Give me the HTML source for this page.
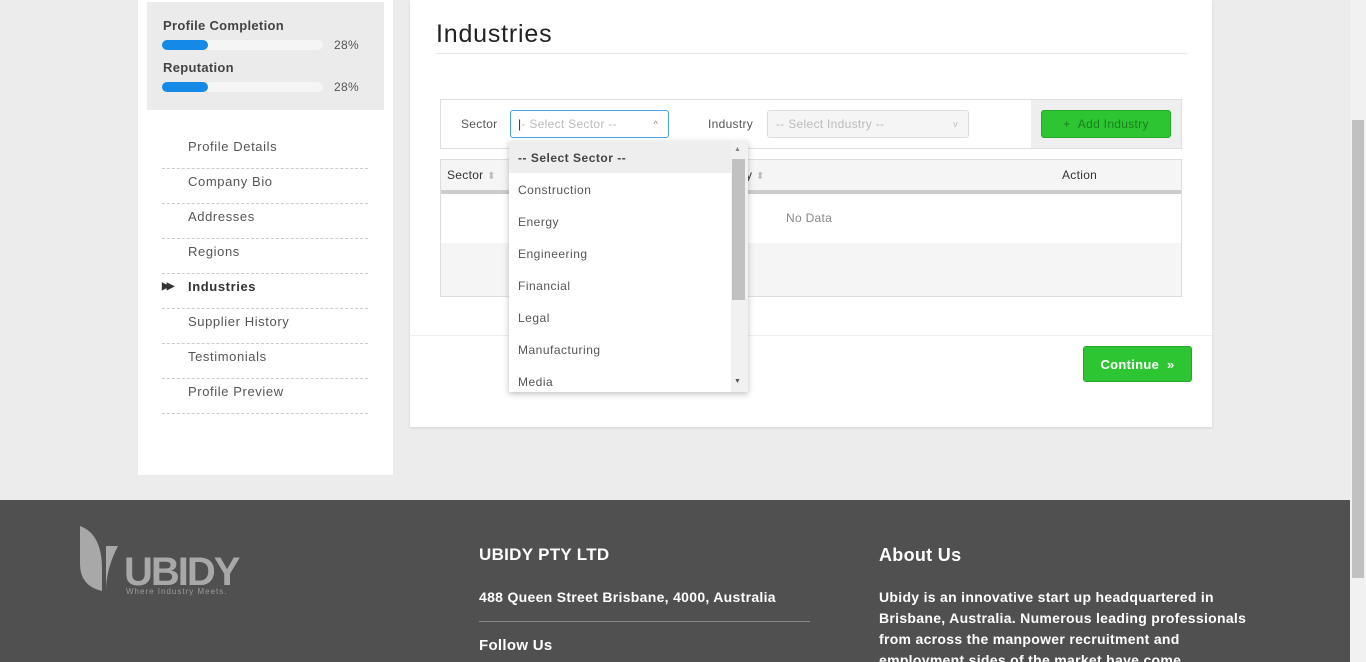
<!DOCTYPE html>
<html><head><style>
*{box-sizing:border-box;margin:0;padding:0}
html,body{width:1366px;height:662px;overflow:hidden}
body{background:#ececec;font-family:"Liberation Sans",sans-serif;position:relative;color:#444;letter-spacing:.3px}
.abs{position:absolute}
.side{left:138px;top:0;width:255px;height:475px;background:#fff}
.gbox{left:147px;top:2px;width:237px;height:108px;background:#ebebeb}
.lbl{font-size:13px;font-weight:bold;color:#444}
.bar{width:161px;height:10px;border-radius:5px;background:#f5f5f5}
.bar i{display:block;width:46px;height:10px;border-radius:5px;background:#1589e6}
.pct{font-size:12px;color:#555}
.nav{left:162px;width:206px;height:35px;border-bottom:1px dashed #ccc;font-size:13px;color:#555;padding-left:26px;line-height:26px;letter-spacing:.6px}
.main{left:410px;top:0;width:802px;height:427px;background:#fff;box-shadow:0 1px 3px rgba(0,0,0,.1)}
.foot{left:0;top:500px;width:1350px;height:162px;background:#505050;color:#fff}
.sb{left:1350px;top:0;width:16px;height:662px;background:#f1f1f1}
.opt{height:32px;line-height:34px;padding-left:9px;font-size:12px;color:#555;letter-spacing:.5px}
</style></head><body>
<div class="abs side"></div>
<div class="abs gbox"></div>
<div class="abs lbl" style="left:163px;top:18px">Profile Completion</div>
<div class="abs bar" style="left:162px;top:40px"><i></i></div>
<div class="abs pct" style="left:334px;top:38px">28%</div>
<div class="abs lbl" style="left:163px;top:60px">Reputation</div>
<div class="abs bar" style="left:162px;top:82px"><i></i></div>
<div class="abs pct" style="left:334px;top:80px">28%</div>
<div class="abs nav" style="top:134px">Profile Details</div>
<div class="abs nav" style="top:169px">Company Bio</div>
<div class="abs nav" style="top:204px">Addresses</div>
<div class="abs nav" style="top:239px">Regions</div>
<div class="abs nav" style="top:274px;color:#333;font-weight:bold"><span style="position:absolute;left:0;font-size:10px;letter-spacing:-3px">▶▶</span>Industries</div>
<div class="abs nav" style="top:309px">Supplier History</div>
<div class="abs nav" style="top:344px">Testimonials</div>
<div class="abs nav" style="top:379px">Profile Preview</div>

<div class="abs main"></div>
<div class="abs" style="left:436px;top:20px;font-size:25px;color:#222;letter-spacing:.8px">Industries</div>
<div class="abs" style="left:436px;top:53px;width:751px;height:1px;background:#e8e8e8"></div>
<div class="abs" style="left:440px;top:99px;width:742px;height:50px;border:1px solid #e0e0e0;background:#fff"></div>
<div class="abs" style="left:1031px;top:100px;width:150px;height:48px;background:#eee"></div>
<div class="abs" style="left:461px;top:117px;font-size:12px;color:#555">Sector</div>
<div class="abs" style="left:510px;top:110px;width:159px;height:28px;border:1px solid #4aa3e8;border-radius:3px;font-size:12px;color:#bbb;line-height:26px;padding-left:7px"><span style="color:#333">|</span>- Select Sector --<span style="position:absolute;right:10px;font-size:9px;color:#888">^</span></div>
<div class="abs" style="left:708px;top:117px;font-size:12px;color:#555">Industry</div>
<div class="abs" style="left:767px;top:110px;width:202px;height:28px;border:1px solid #ddd;border-radius:3px;background:#f5f5f5;font-size:12px;color:#bbb;line-height:26px;padding-left:8px">-- Select Industry --<span style="position:absolute;right:10px;font-size:9px;color:#bbb">v</span></div>
<div class="abs" style="left:1041px;top:110px;width:130px;height:28px;background:#2dc632;border:1px solid #25a82a;border-radius:3px;font-size:12px;color:#1a7f1e;line-height:26px;text-align:center">+&nbsp;&nbsp;Add Industry</div>
<div class="abs" style="left:440px;top:159px;width:742px;height:138px;border:1px solid #ddd;background:#f5f5f5"></div>
<div class="abs" style="left:441px;top:190px;width:740px;height:4px;background:#ccc"></div>
<div class="abs" style="left:441px;top:194px;width:740px;height:49px;background:#fff"></div>
<div class="abs" style="left:447px;top:168px;font-size:12px;color:#333">Sector <span style="color:#bbb;font-size:10px">⬍</span></div>
<div class="abs" style="left:746px;top:168px;font-size:12px;color:#333">y <span style="color:#bbb;font-size:10px">⬍</span></div>
<div class="abs" style="left:1062px;top:168px;font-size:12px;color:#333">Action</div>
<div class="abs" style="left:786px;top:211px;font-size:12px;color:#888">No Data</div>
<div class="abs" style="left:410px;top:335px;width:802px;height:1px;background:#eee"></div>
<div class="abs" style="left:1083px;top:346px;width:109px;height:36px;background:#2dc632;border:1px solid #25a82a;border-radius:3px;color:#fff;font-size:13px;font-weight:bold;line-height:36px;text-align:center">Continue &nbsp;»</div>

<div class="abs" style="left:509px;top:141px;width:239px;height:251px;background:#fff;box-shadow:0 2px 6px rgba(0,0,0,.25);overflow:hidden">
<div class="opt" style="background:#eee;font-weight:bold;color:#444">-- Select Sector --</div>
<div class="opt">Construction</div><div class="opt">Energy</div><div class="opt">Engineering</div><div class="opt">Financial</div><div class="opt">Legal</div><div class="opt">Manufacturing</div><div class="opt">Media</div>
<div class="abs" style="left:222px;top:0;width:17px;height:251px;background:#f1f1f1"></div>
<div class="abs" style="left:223px;top:18px;width:13px;height:141px;background:#c1c1c1"></div>
<div class="abs" style="left:225px;top:5px;font-size:7px;color:#888">▲</div>
<div class="abs" style="left:225px;top:237px;font-size:7px;color:#555">▼</div>
</div>

<div class="abs foot"></div>
<svg class="abs" style="left:80px;top:524px" width="170" height="74"><path d="M0 2 Q22 10 22 45 L22 67 Q0 62 0 40Z M26 22 L38 22 Q26 45 26 67 Z" fill="#a8a8a8"/><text x="44" y="61" font-family="Liberation Sans" font-weight="bold" font-size="40" fill="#a8a8a8" letter-spacing="-2">UBIDY</text><text x="46" y="70" font-family="Liberation Sans" font-size="8" fill="#999" letter-spacing="1">Where Industry Meets.</text></svg>
<div class="abs" style="left:479px;top:545px;font-size:17px;font-weight:bold;color:#fff">UBIDY PTY LTD</div>
<div class="abs" style="left:479px;top:589px;font-size:14px;font-weight:bold;color:#fff">488 Queen Street Brisbane, 4000, Australia</div>
<div class="abs" style="left:479px;top:621px;width:331px;height:1px;background:#888"></div>
<div class="abs" style="left:479px;top:637px;font-size:15px;font-weight:bold;color:#fff">Follow Us</div>
<div class="abs" style="left:879px;top:545px;font-size:18px;font-weight:bold;color:#fff">About Us</div>
<div class="abs" style="left:879px;top:587px;width:385px;font-size:14px;font-weight:bold;color:#fff;line-height:21px">Ubidy is an innovative start up headquartered in Brisbane, Australia. Numerous leading professionals from across the manpower recruitment and employment sides of the market have come</div>
<div class="abs sb"></div>
<div class="abs" style="left:1352px;top:120px;width:12px;height:458px;background:#c1c1c1"></div>
</body></html>
